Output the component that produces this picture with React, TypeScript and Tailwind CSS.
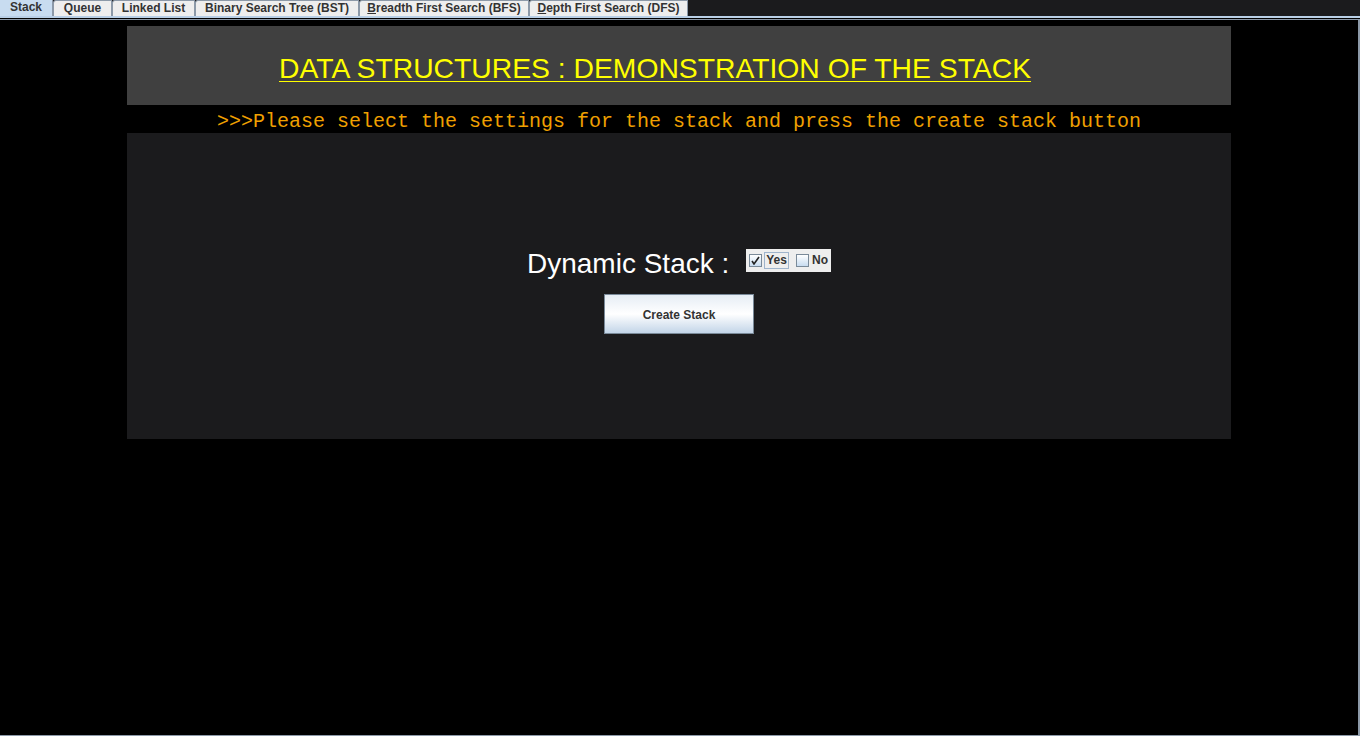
import React from "react";

const tabs = [
  { label: "Stack", w: "w-[53px]" },
  { label: "Queue", w: "w-[59px]" },
  { label: "Linked List", w: "w-[83px]" },
  { label: "Binary Search Tree (BST)", w: "w-[164px]" },
  { label: "Breadth First Search (BFS)", w: "w-[170px]", mn: true },
  { label: "Depth First Search (DFS)", w: "w-[159px]", mn: true },
];

const Tab = ({ label, w, active, mn }: { label: string; w: string; active?: boolean; mn?: boolean }) => (
  <div
    className={`${w} h-[16px] flex items-center justify-center pb-[2px] border-r border-[#8c99a8] text-[12px] font-bold text-[#333] leading-none ${
      active ? "bg-[#c8dcf0]" : "bg-[#eeeeee] border-t border-l border-t-[#8c99a8] border-l-[#8c99a8] rounded-tl-[3px]"
    }`}
  >
    {mn ? (
      <span>
        <span className="underline">{label[0]}</span>
        {label.slice(1)}
      </span>
    ) : (
      label
    )}
  </div>
);

const App = () => {
  return (
    <div className="w-[1360px] h-[736px] bg-black flex flex-col font-['Liberation_Sans',Arial,sans-serif] overflow-hidden">
      <div className="h-[16px] bg-[#1b1b1d] flex">
        {tabs.map((t, i) => (
          <Tab key={t.label} label={t.label} w={t.w} active={i === 0} mn={t.mn} />
        ))}
      </div>
      <div className="h-[2px] bg-[#b9cfe6]" />
      <div className="h-[1px] bg-black" />
      <div className="h-[1px] bg-[#8c99a8]" />
      <div className="flex-1 flex flex-col border-r-2 border-b border-[#8c99a8] bg-black">
        <div className="mt-[6px] ml-[127px] w-[1104px] flex flex-col">
          <div className="h-[79px] bg-[#404040] flex items-center pl-[152px] pt-[6px]">
            <span className="text-[#ffff00] text-[28.3px] underline underline-offset-[3px] decoration-1">
              DATA STRUCTURES : DEMONSTRATION OF THE STACK
            </span>
          </div>
          <div className="h-[28px] flex items-center justify-center pt-[6px]">
            <span className="font-['Liberation_Mono','Courier_New',monospace] text-[20px] text-[#f0a000] leading-none">
              &gt;&gt;&gt;Please select the settings for the stack and press the create stack button
            </span>
          </div>
          <div className="h-[306px] bg-[#1b1b1d] flex flex-col items-center pt-[116px]">
            <div className="flex items-center gap-[17px]">
              <span className="text-white text-[28px] leading-none">Dynamic Stack :</span>
              <div className="h-[23px] mb-[6px] bg-[#eeeeee] flex items-center pl-[3px] pr-[2px] gap-[2px] text-[12px] font-bold text-[#333]">
                <span className="w-[13px] h-[13px] border border-[#7a8a99] bg-gradient-to-b from-white to-[#c8dcf0] flex items-center justify-center">
                  <svg width="9" height="9" viewBox="0 0 9 9">
                    <path d="M1 5 L3 8 L8 1" stroke="#222" strokeWidth="1.6" fill="none" />
                  </svg>
                </span>
                <span className="border border-[#9fb4cc] px-[1px] leading-[15px]">Yes</span>
                <span className="w-[13px] h-[13px] ml-[5px] border border-[#7a8a99] bg-gradient-to-b from-white to-[#c8dcf0]" />
                <span className="px-[1px] leading-[15px]">No</span>
              </div>
            </div>
            <button className="mt-[16px] w-[150px] h-[40px] pt-[2px] border border-[#7a8a99] bg-gradient-to-b from-[#e6edf5] via-white to-[#c3d5e8] text-[12px] font-bold text-[#333]">
              Create Stack
            </button>
          </div>
        </div>
      </div>
    </div>
  );
};

export default App;
